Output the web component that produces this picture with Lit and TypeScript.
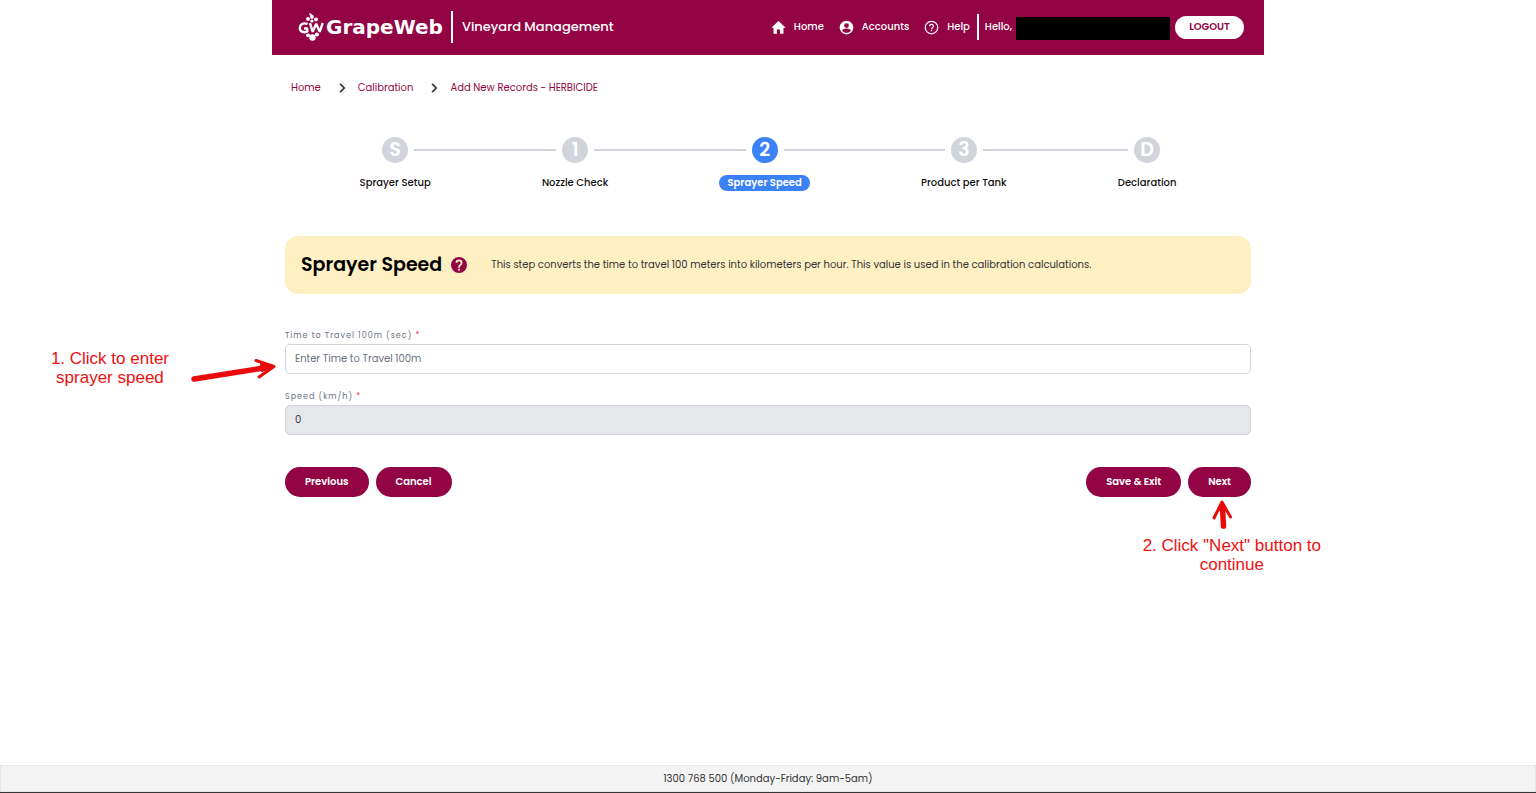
import { LitElement, html, svg, css } from "lit";
import { customElement, state } from "lit/decorators.js";
import { classMap } from "lit/directives/class-map.js";

interface Step {
  mark: string;
  label: string;
}

const STEPS: Step[] = [
  { mark: "S", label: "Sprayer Setup" },
  { mark: "1", label: "Nozzle Check" },
  { mark: "2", label: "Sprayer Speed" },
  { mark: "3", label: "Product per Tank" },
  { mark: "D", label: "Declaration" },
];

const icon = (cls: string, body: unknown) =>
  html`<svg class=${cls} viewBox="0 0 24 24" fill="currentColor" aria-hidden="true">${body}</svg>`;

const homeIcon = svg`<path d="M9.500 22v-7h5v7H20v-9.500h3.500L12 1.500.5 12.500H4V22z"/>`;
const accountIcon = svg`<path fill-rule="evenodd" d="M12 1a11 11 0 1 0 0 22 11 11 0 0 0 0-22zm0 4a3.8 3.8 0 1 1 0 7.600 3.800 3.800 0 0 1 0-7.600zm0 15.400c-2.900 0-5.400-1.300-6.900-3.400.1-2.200 4.600-3.300 6.900-3.300s6.800 1.100 6.900 3.300c-1.500 2.100-4 3.400-6.900 3.400z"/>`;
const helpIcon = svg`<path d="M11 18h2v-2h-2v2zm1-17a11 11 0 1 0 0 22 11 11 0 0 0 0-22zm0 20a9 9 0 1 1 0-18 9 9 0 0 1 0 18zm0-15a4 4 0 0 0-4 4h2a2 2 0 1 1 4 0c0 2-3 1.750-3 5h2c0-2.250 3-2.500 3-5a4 4 0 0 0-4-4z"/>`;
const helpSolidIcon = svg`<path fill-rule="evenodd" d="M12 0a12 12 0 1 0 0 24 12 12 0 0 0 0-24zm1.400 20.300h-2.800v-2.700h2.800v2.700zm2.700-8.700-1.200 1.200c-1 1-1.500 1.700-1.500 3.500h-2.700v-.7c0-1.400.5-2.600 1.500-3.600l1.500-1.500c.5-.4.8-1 .8-1.700a2.500 2.500 0 0 0-5 0H6.800a5.200 5.200 0 0 1 10.400 0c0 1.100-.4 2.100-1.100 2.800z"/>`;
const chevronIcon = svg`<path d="M5 2l10 10L5 22" fill="none" stroke="currentColor" stroke-width="4"/>`;

@customElement("app-root")
export class AppRoot extends LitElement {
  @state() private current = 2;
  @state() private seconds = "";

  static styles = css`
    :host {
      --wine: #930444;
      display: flex;
      flex-direction: column;
      min-height: 100vh;
      box-sizing: border-box;
      background: #fff;
      color: #111;
      font-family: Poppins, Inter, sans-serif;
      font-size: 10px;
      line-height: 16px;
      border-bottom: 1px solid #333;
      overflow-x: hidden;
    }
    * { box-sizing: border-box; }
    a { color: inherit; text-decoration: none; }
    button, input { font: inherit; }
    .shell {
      width: 100%;
      max-width: 992px;
      margin: 0 auto;
      flex: 1;
    }
    header {
      display: flex;
      align-items: center;
      justify-content: space-between;
      height: 55px;
      padding: 0 20px 1px 26px;
      background: var(--wine);
      color: #fff;
    }
    .brand, .nav, .nav a { display: flex; align-items: center; }
    .logo { width: 27px; height: 28px; }
    .name {
      margin-left: 1px;
      font: 700 20px/32px "DejaVu Sans", sans-serif;
    }
    .bar { width: 2px; height: 32px; margin: 0 9px 0 8px; background: #fff; }
    .product { font-size: 13px; font-weight: 500; }
    .nav { font-weight: 500; }
    .nav a { gap: 8px; margin-right: 15px; }
    .nav a:last-of-type { margin-right: 7px; }
    .nav-icon { width: 15px; height: 15px; }
    .nav-bar { width: 2px; height: 26px; margin-right: 6px; background: #fff; }
    .user { width: 154px; height: 23px; margin: 2px 5px 0 4px; background: #000; }
    .logout {
      height: 23px;
      width: 69px;
      padding: 0;
      border: 0;
      border-radius: 12px;
      background: #fff;
      color: var(--wine);
      font-weight: 600;
    }
    main { padding: 25px 13px 0; }
    .crumbs {
      display: flex;
      align-items: center;
      padding-left: 6px;
      color: var(--wine);
    }
    .chevron { width: 10px; height: 10px; margin: 0 10px 0 17px; color: #333; }
    .steps {
      display: flex;
      list-style: none;
      margin: 41px 19px 45px;
      padding: 0;
    }
    .step {
      flex: 1 1 auto;
      display: flex;
      flex-direction: column;
      align-items: center;
      gap: 12px;
    }
    .track { display: flex; align-items: center; align-self: stretch; gap: 6px; }
    .track::before, .track::after {
      content: "";
      flex: 1;
      height: 2px;
      background: #d1d5db;
    }
    .step:first-child .track::before, .step:last-child .track::after { background: none; }
    .mark {
      width: 26px;
      height: 26px;
      border-radius: 50%;
      background: #d1d5db;
      color: #fff;
      text-align: center;
      font-size: 19px;
      line-height: 26px;
      font-weight: 600;
    }
    .label { font-weight: 500; border-radius: 8px; }
    .active .mark { background: #3b82f6; }
    .active .label { padding: 0 8px; background: #3b82f6; color: #fff; font-weight: 600; }
    .banner {
      display: flex;
      align-items: center;
      min-height: 58px;
      padding: 0 16px;
      border-radius: 13px;
      background: #fef0c3;
    }
    h1 { margin: 0; font-size: 19px; line-height: 30px; font-weight: 600; color: #000; }
    .help { width: 16px; height: 16px; margin: 0 24px 0 9px; color: var(--wine); flex: none; }
    .banner p { margin: 0; color: #333; }
    form { margin-top: 33px; }
    .field { position: relative; display: grid; margin-bottom: 14px; }
    .field label { font-size: 8px; line-height: 17px; letter-spacing: 1px; color: #6b7280; }
    .req { color: #ef4444; }
    .field input {
      width: 100%;
      height: 30px;
      padding: 0 9px;
      border: 1px solid #d1d5db;
      border-radius: 5px;
      background: #fff;
      color: #374151;
    }
    .field input::placeholder { color: #6b7280; opacity: 1; }
    .field input[readonly] { background: #e5e7eb; }
    .actions { display: flex; gap: 7px; margin-top: 32px; }
    .btn {
      height: 30px;
      padding: 0 20px;
      border: 0;
      border-radius: 15px;
      background: var(--wine);
      color: #fff;
      font-weight: 600;
    }
    .end { margin-left: auto; }
    .next { position: relative; display: flex; }
    .note {
      position: absolute;
      color: #f01010;
      font: 17px/19px "Liberation Sans", Arial, sans-serif;
      text-align: center;
      white-space: nowrap;
    }
    .arrow { position: absolute; overflow: visible; fill: none; stroke: #e90b0b; stroke-linecap: round; stroke-linejoin: round; }
    .note-time { right: calc(100% + 116px); top: 22px; }
    .arrow-time { right: calc(100% + 9px); top: 30px; width: 86px; height: 24px; }
    .note-next { right: -70px; top: 69px; }
    .arrow-next { right: 19px; top: 32px; width: 20px; height: 30px; }
    footer {
      height: 27px;
      border: 1px solid #e5e7eb;
      background: #f4f4f4;
      color: #333;
      line-height: 25px;
      text-align: center;
    }
  `;

  private get speed() {
    const s = Number(this.seconds);
    return s > 0 ? (360 / s).toFixed(2) : "0";
  }

  private onTime(e: Event) {
    this.seconds = (e.target as HTMLInputElement).value;
  }

  private renderLogo() {
    return html`<svg class="logo" viewBox="0 0 27 28" aria-hidden="true">
      <g fill="#fff">
        <circle cx="10" cy="6" r="1.900" /><circle cx="14" cy="4" r="1.900" />
        <circle cx="18" cy="6.500" r="1.900" /><circle cx="14" cy="8" r="1.600" />
        <circle cx="10" cy="22.300" r="2" /><circle cx="19" cy="21.500" r="2.100" />
        <circle cx="14.500" cy="24.500" r="3.200" />
        <path d="M11 0l3 1.200 1.200 3.300-3-1z" />
      </g>
      <g fill="none" stroke="#930444" stroke-width="4" stroke-linejoin="round">
        <path d="M9.500 11.200C5 9 1.800 11.500 1.800 15S5 20 9.300 18.700V15.500H6" />
        <path d="M12 10.500l2.700 8 3.500-7.500 3.500 7.500 3-8" />
      </g>
      <g fill="none" stroke="#fff" stroke-width="2.400" stroke-linejoin="bevel">
        <path d="M9.500 11.200C5 9 1.800 11.500 1.800 15S5 20 9.300 18.700V15.500H6" />
        <path d="M12 10l2.700 8.800 3.500-8 3.500 8 3-8.800" />
      </g>
    </svg>`;
  }

  render() {
    return html`
      <div class="shell">
        <header>
          <div class="brand">
            ${this.renderLogo()}
            <span class="name">GrapeWeb</span>
            <span class="bar"></span>
            <span class="product">Vineyard Management</span>
          </div>
          <nav class="nav">
            <a href="#home">${icon("nav-icon", homeIcon)}Home</a>
            <a href="#accounts">${icon("nav-icon", accountIcon)}Accounts</a>
            <a href="#help">${icon("nav-icon", helpIcon)}Help</a>
            <span class="nav-bar"></span>
            <span>Hello,</span>
            <span class="user"></span>
            <button class="logout" type="button">LOGOUT</button>
          </nav>
        </header>
        <main>
          <nav class="crumbs" aria-label="Breadcrumb">
            <a href="#home">Home</a>${icon("chevron", chevronIcon)}
            <a href="#calibration">Calibration</a>${icon("chevron", chevronIcon)}
            <a href="#new">Add New Records - HERBICIDE</a>
          </nav>
          <ol class="steps">
            ${STEPS.map(
              (s, i) => html`<li class=${classMap({ step: true, active: i === this.current })}>
                <div class="track"><span class="mark">${s.mark}</span></div>
                <span class="label">${s.label}</span>
              </li>`
            )}
          </ol>
          <section class="banner">
            <h1>Sprayer Speed</h1>
            ${icon("help", helpSolidIcon)}
            <p>This step converts the time to travel 100 meters into kilometers per hour. This value is used in the calibration calculations.</p>
          </section>
          <form @submit=${(e: Event) => e.preventDefault()}>
            <div class="field">
              <label for="time">Time to Travel 100m (sec) <span class="req">*</span></label>
              <input id="time" type="text" inputmode="decimal" placeholder="Enter Time to Travel 100m" .value=${this.seconds} @input=${this.onTime} />
              <div class="note note-time">1. Click to enter<br />sprayer speed</div>
              <svg class="arrow arrow-time" viewBox="0 0 86 24" aria-hidden="true">
                <path d="M4 22L74 11" stroke-width="5.500" />
                <path d="M66 3.500L84 9.500 69 20" stroke-width="3" />
                <path d="M71 7.500L83 9.500 72 14z" stroke-width="2" fill="#e90b0b" />
              </svg>
            </div>
            <div class="field">
              <label for="speed">Speed (km/h) <span class="req">*</span></label>
              <input id="speed" type="text" readonly .value=${this.speed} />
            </div>
            <div class="actions">
              <button class="btn" type="button">Previous</button>
              <button class="btn" type="button">Cancel</button>
              <button class="btn end" type="button">Save &amp; Exit</button>
              <div class="next">
                <button class="btn" type="submit">Next</button>
                <svg class="arrow arrow-next" viewBox="0 0 20 30" aria-hidden="true">
                  <path d="M11.500 27L10.500 9" stroke-width="5.500" />
                  <path d="M2 19L10 3 18.500 18" stroke-width="3" />
                  <path d="M7 11L10 3.500 14 11z" stroke-width="2" fill="#e90b0b" />
                </svg>
                <div class="note note-next">2. Click "Next" button to<br />continue</div>
              </div>
            </div>
          </form>
        </main>
      </div>
      <footer>1300 768 500 (Monday-Friday: 9am-5am)</footer>
    `;
  }
}
